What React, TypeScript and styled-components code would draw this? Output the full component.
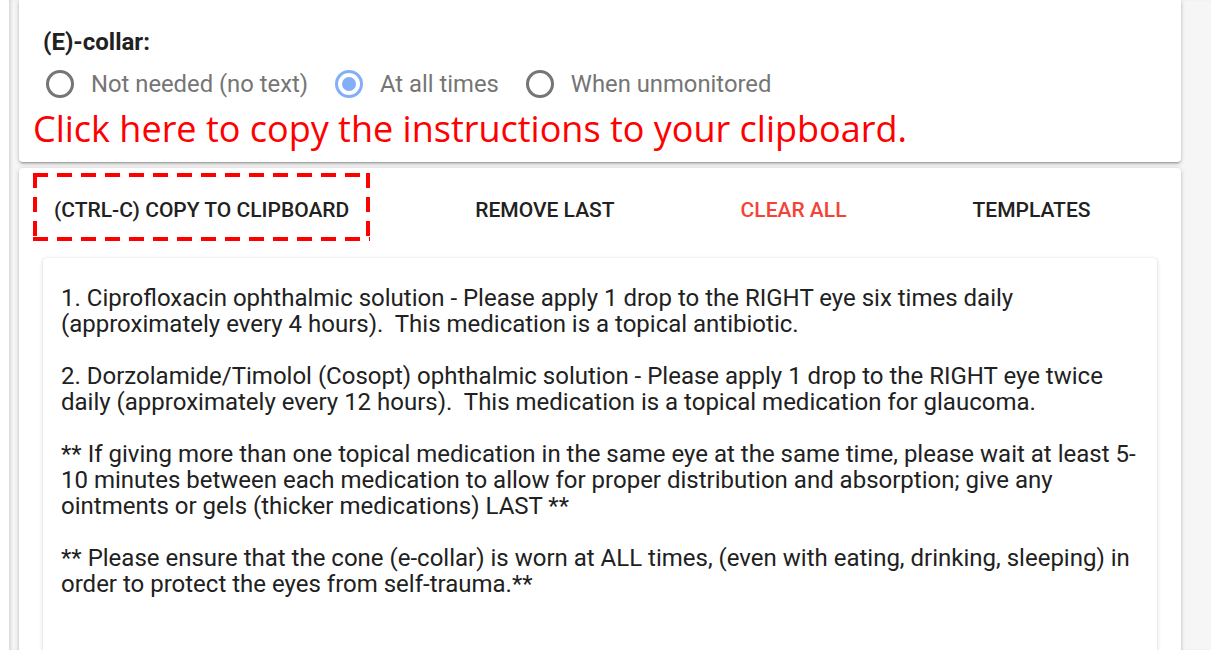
import React from 'react'
import styled, { createGlobalStyle } from 'styled-components'

const GlobalStyle = createGlobalStyle`
  html, body {
    margin: 0;
    padding: 0;
    background: #ffffff;
    font-family: Roboto, 'Liberation Sans', sans-serif;
  }
`

const Viewport = styled.div`
  margin-left: 9px;
  width: 1202px;
  height: 650px;
  overflow: hidden;
  background: #f6f6f6;
  box-shadow: inset 3px 0 3px -1px rgba(0, 0, 0, 0.12);
  padding-left: 10px;
  box-sizing: border-box;
`

const Card = styled.div<{ $first?: boolean }>`
  width: 1162px;
  box-sizing: border-box;
  background: #ffffff;
  border-radius: ${p => (p.$first ? '0 0 4px 4px' : '4px 4px 0 0')};
  margin-top: ${p => (p.$first ? '0' : '6px')};
  box-shadow: 0 2px 2px rgba(0, 0, 0, 0.14), 0 3px 1px -2px rgba(0, 0, 0, 0.12),
    0 1px 5px rgba(0, 0, 0, 0.2);
`

const CollarCard = styled(Card)`
  height: 162px;
  padding: 29px 0 0 24px;
`

const Label = styled.div`
  font-size: 24px;
  line-height: 26px;
  font-weight: 700;
  color: #212121;
`

const RadioRow = styled.div`
  display: flex;
  align-items: center;
  height: 36px;
  margin-top: 11px;
  margin-left: 3px;
`

const RadioOption = styled.label`
  display: flex;
  align-items: center;
  gap: 17px;
  margin-right: 27px;
  font-size: 23.8px;
  color: #757575;
`

const RadioCircle = styled.span<{ $checked?: boolean }>`
  width: 28px;
  height: 28px;
  box-sizing: border-box;
  border-radius: 50%;
  border: 3px solid ${p => (p.$checked ? '#82aff8' : '#757575')};
  display: flex;
  align-items: center;
  justify-content: center;

  &::after {
    content: '';
    display: ${p => (p.$checked ? 'block' : 'none')};
    width: 14px;
    height: 14px;
    border-radius: 50%;
    background: #82aff8;
  }
`

const Hint = styled.div`
  font-family: 'Open Sans', 'Noto Sans', sans-serif;
  font-size: 36px;
  line-height: 40px;
  color: #ff0000;
  margin: 7px 0 0 -10px;
`

const ActionCard = styled(Card)`
  height: 500px;
  padding: 5px 24px 0;
`

const Toolbar = styled.div`
  display: flex;
  align-items: center;
  gap: 84px;
  margin-left: -10px;
`

const dash = '#ff0000 0 15px, transparent 15px 24px'

const ActionButton = styled.button<{ $danger?: boolean; $marked?: boolean }>`
  height: 68px;
  padding: 6px 21px 0;
  border: none;
  background: ${p =>
    p.$marked
      ? `repeating-linear-gradient(90deg, ${dash}) top left / 100% 4px no-repeat,
         repeating-linear-gradient(90deg, ${dash}) bottom left / 100% 4px no-repeat,
         repeating-linear-gradient(180deg, ${dash}) top left / 4px 100% no-repeat,
         repeating-linear-gradient(180deg, ${dash}) top right / 4px 100% no-repeat`
      : 'none'};
  font-family: Roboto, 'Liberation Sans', sans-serif;
  font-size: 21px;
  font-weight: 500;
  text-transform: uppercase;
  color: ${p => (p.$danger ? '#f44336' : '#212121')};
  cursor: pointer;
`

const Instructions = styled.div`
  margin-top: 17px;
  height: 420px;
  padding: 27px 20px 0 18px;
  box-sizing: border-box;
  border-radius: 4px;
  background: #ffffff;
  box-shadow: 0 1px 4px rgba(0, 0, 0, 0.16), 0 0 1px rgba(0, 0, 0, 0.12);
  white-space: pre-wrap;
  font-size: 24px;
  line-height: 26px;
  color: #212121;
`

const options = [
  { label: 'Not needed (no text)', checked: false },
  { label: 'At all times', checked: true },
  { label: 'When unmonitored', checked: false },
]

const text = `1. Ciprofloxacin ophthalmic solution - Please apply 1 drop to the RIGHT eye six times daily (approximately every 4 hours).  This medication is a topical antibiotic.

2. Dorzolamide/Timolol (Cosopt) ophthalmic solution - Please apply 1 drop to the RIGHT eye twice daily (approximately every 12 hours).  This medication is a topical medication for glaucoma.

** If giving more than one topical medication in the same eye at the same time, please wait at least 5-10 minutes between each medication to allow for proper distribution and absorption; give any ointments or gels (thicker medications) LAST **

** Please ensure that the cone (e-collar) is worn at ALL times, (even with eating, drinking, sleeping) in order to protect the eyes from self-trauma.**`

export default function App() {
  return (
    <>
      <GlobalStyle />
      <Viewport>
        <CollarCard $first>
          <Label>(E)-collar:</Label>
          <RadioRow>
            {options.map(o => (
              <RadioOption key={o.label}>
                <RadioCircle $checked={o.checked} />
                {o.label}
              </RadioOption>
            ))}
          </RadioRow>
          <Hint>Click here to copy the instructions to your clipboard.</Hint>
        </CollarCard>
        <ActionCard>
          <Toolbar>
            <ActionButton $marked>(Ctrl-C) Copy to clipboard</ActionButton>
            <ActionButton>Remove last</ActionButton>
            <ActionButton $danger>Clear all</ActionButton>
            <ActionButton>Templates</ActionButton>
          </Toolbar>
          <Instructions>{text}</Instructions>
        </ActionCard>
      </Viewport>
    </>
  )
}
